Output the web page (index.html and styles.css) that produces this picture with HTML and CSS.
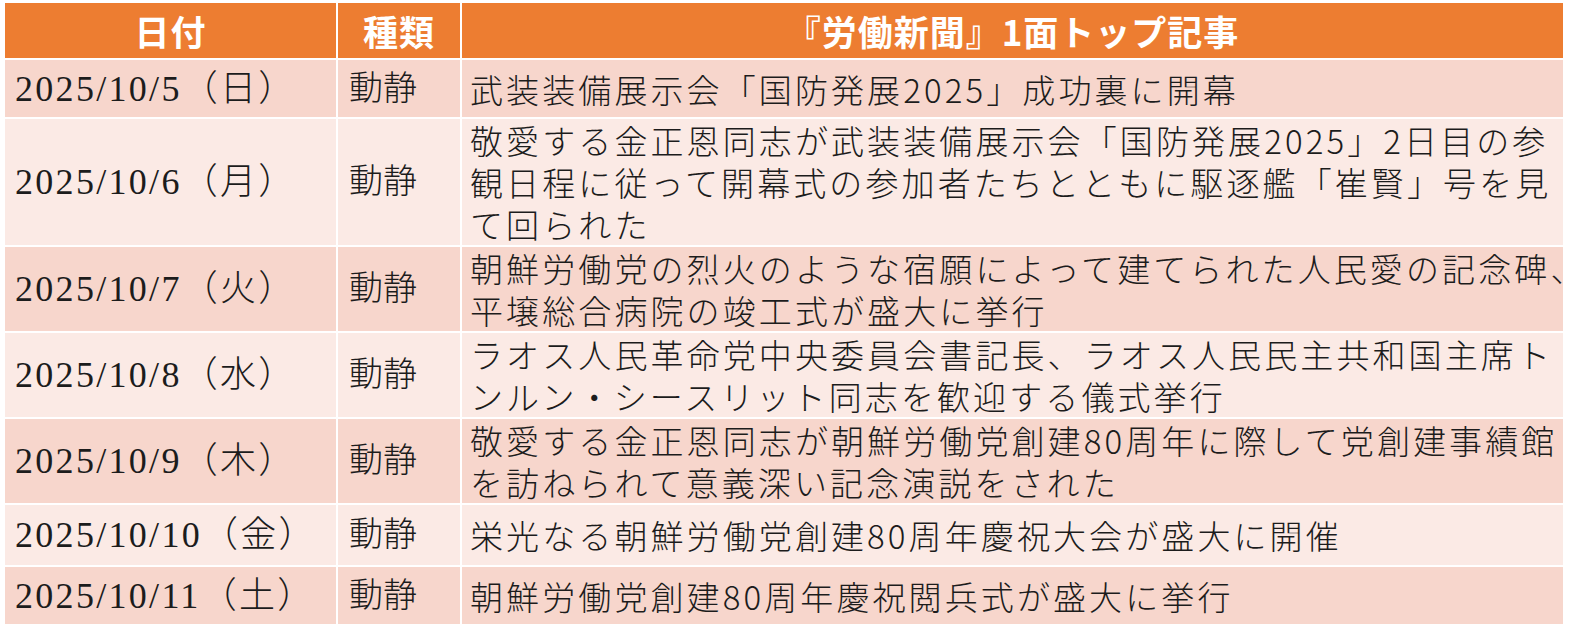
FILE: index.html
```html
<!DOCTYPE html>
<html lang="ja">
<head>
<meta charset="utf-8">
<title>労働新聞 1面トップ記事</title>
<link rel="stylesheet" href="styles.css">
</head>
<body>
<table class="news">
  <colgroup>
    <col class="c-date">
    <col class="c-type">
    <col class="c-title">
  </colgroup>
  <thead>
    <tr>
      <th>日付</th>
      <th>種類</th>
      <th>『労働新聞』1面トップ記事</th>
    </tr>
  </thead>
  <tbody>
    <tr class="odd">
      <td class="date">2025/10/5（日）</td>
      <td class="type">動静</td>
      <td class="title">武装装備展示会「国防発展2025」成功裏に開幕</td>
    </tr>
    <tr class="even">
      <td class="date">2025/10/6（月）</td>
      <td class="type">動静</td>
      <td class="title">敬愛する金正恩同志が武装装備展示会「国防発展2025」2日目の参<br>観日程に従って開幕式の参加者たちとともに駆逐艦「崔賢」号を見<br>て回られた</td>
    </tr>
    <tr class="odd">
      <td class="date">2025/10/7（火）</td>
      <td class="type">動静</td>
      <td class="title">朝鮮労働党の烈火のような宿願によって建てられた人民愛の記念碑<span class="half">、</span><br>平壌総合病院の竣工式が盛大に挙行</td>
    </tr>
    <tr class="even">
      <td class="date">2025/10/8（水）</td>
      <td class="type">動静</td>
      <td class="title">ラオス人民革命党中央委員会書記長、ラオス人民民主共和国主席ト<br>ンルン・シースリット同志を歓迎する儀式挙行</td>
    </tr>
    <tr class="odd">
      <td class="date">2025/10/9（木）</td>
      <td class="type">動静</td>
      <td class="title">敬愛する金正恩同志が朝鮮労働党創建80周年に際して党創建事績館<br>を訪ねられて意義深い記念演説をされた</td>
    </tr>
    <tr class="even tall">
      <td class="date">2025/10/10（金）</td>
      <td class="type">動静</td>
      <td class="title">栄光なる朝鮮労働党創建80周年慶祝大会が盛大に開催</td>
    </tr>
    <tr class="odd">
      <td class="date">2025/10/11（土）</td>
      <td class="type">動静</td>
      <td class="title">朝鮮労働党創建80周年慶祝閲兵式が盛大に挙行</td>
    </tr>
  </tbody>
</table>
</body>
</html>
```
FILE: styles.css
```css
html, body {
  margin: 0;
  padding: 0;
  background: #ffffff;
}

.news {
  margin: 1px 0 0 3px;
  border-collapse: separate;
  border-spacing: 2px;
  table-layout: fixed;
  width: 1562px;
}

.c-date { width: 331px; }
.c-type { width: 122px; }
.c-title { width: 1101px; }

.news th {
  background: #ed7d31;
  color: #ffffff;
  font-family: "Noto Sans CJK JP", sans-serif;
  font-weight: 700;
  font-size: 35px;
  letter-spacing: 1px;
  height: 55px;
  padding: 0;
  text-align: center;
  vertical-align: middle;
  line-height: 40px;
  white-space: nowrap;
}

.news td {
  padding: 0;
  height: 57px;
  vertical-align: middle;
  white-space: nowrap;
  overflow: visible;
  color: #1c1c1c;
}

.news tr.tall td { height: 60px; }

.news tr.odd td { background: #f7d6cc; }
.news tr.even td { background: #fbeae5; }

.date {
  font-family: "Liberation Serif", "Noto Sans CJK JP", serif;
  font-weight: 300;
  font-size: 36px;
  letter-spacing: 2.3px;
  padding-left: 10px !important;
  line-height: 42px;
}

.type {
  font-family: "Liberation Serif", "Noto Sans CJK JP", serif;
  font-weight: 300;
  font-size: 34px;
  padding-left: 11px !important;
  line-height: 42px;
}

.title {
  font-family: "Noto Sans CJK JP", sans-serif;
  font-weight: 300;
  font-size: 33px;
  letter-spacing: 3.1px;
  line-height: 42px;
  padding-left: 8px !important;
}

.half {
  font-feature-settings: "halt";
  letter-spacing: 0;
}
```
